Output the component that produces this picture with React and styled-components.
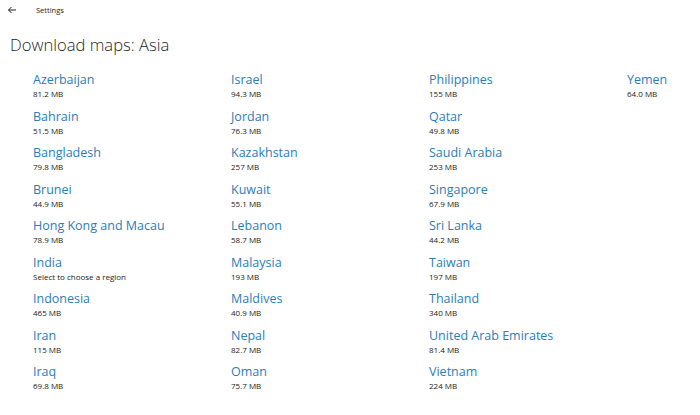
import React from "react";
import styled, { createGlobalStyle } from "styled-components";

const GlobalStyle = createGlobalStyle`
   html, body {
      margin: 0;
      background: #ffffff;
   }
   body {
      font-family: "Open Sans", "Noto Sans", sans-serif;
      color: #1a1a1a;
   }
`;

const regions = [
   ["Azerbaijan", "81.2 MB"],
   ["Bahrain", "51.5 MB"],
   ["Bangladesh", "79.8 MB"],
   ["Brunei", "44.9 MB"],
   ["Hong Kong and Macau", "78.9 MB"],
   ["India", "Select to choose a region"],
   ["Indonesia", "465 MB"],
   ["Iran", "115 MB"],
   ["Iraq", "69.8 MB"],
   ["Israel", "94.3 MB"],
   ["Jordan", "76.3 MB"],
   ["Kazakhstan", "257 MB"],
   ["Kuwait", "55.1 MB"],
   ["Lebanon", "58.7 MB"],
   ["Malaysia", "193 MB"],
   ["Maldives", "40.9 MB"],
   ["Nepal", "82.7 MB"],
   ["Oman", "75.7 MB"],
   ["Philippines", "155 MB"],
   ["Qatar", "49.8 MB"],
   ["Saudi Arabia", "253 MB"],
   ["Singapore", "67.9 MB"],
   ["Sri Lanka", "44.2 MB"],
   ["Taiwan", "197 MB"],
   ["Thailand", "340 MB"],
   ["United Arab Emirates", "81.4 MB"],
   ["Vietnam", "224 MB"],
   ["Yemen", "64.0 MB"],
];

const App = () => {
   return (
      <Page>
         <GlobalStyle />
         <TitleBar>
            <BackButton aria-label="Back">
               <svg width="10" height="10" viewBox="0 0 10 10">
                  <path d="M9 5H1.5M4.5 2L1.5 5L4.5 8" fill="none" stroke="#222" strokeWidth="1" />
               </svg>
            </BackButton>
            <AppName>Settings</AppName>
         </TitleBar>
         <Heading>Download maps: Asia</Heading>
         <RegionGrid>
            {regions.map(([name, size]) => (
               <Region key={name}>
                  <RegionName>{name}</RegionName>
                  <RegionSize>{size}</RegionSize>
               </Region>
            ))}
         </RegionGrid>
      </Page>
   );
};

const Page = styled.div`
   width: 700px;
   height: 415px;
   overflow: hidden;
   background: #ffffff;
`;

const TitleBar = styled.div`
   display: flex;
   align-items: center;
   height: 19px;
   padding-left: 7px;
`;

const BackButton = styled.div`
   display: flex;
   align-items: center;
   justify-content: center;
   width: 10px;
   height: 10px;
   margin-right: 19px;
`;

const AppName = styled.span`
   font-size: 7.5px;
   color: #222;
`;

const Heading = styled.h1`
   margin: 14px 0 0 10px;
   font-size: 16.6px;
   font-weight: 300;
   line-height: 24px;
   color: #1f1f1f;
`;

const RegionGrid = styled.div`
   display: grid;
   grid-auto-flow: column;
   grid-template-rows: repeat(9, 36.5px);
   grid-template-columns: repeat(4, 198px);
   margin: 13px 0 0 33px;
`;

const Region = styled.div`
   display: flex;
   flex-direction: column;
`;

const RegionName = styled.span`
   font-size: 12.5px;
   line-height: 19px;
   color: #2b7db8;
`;

const RegionSize = styled.span`
   font-size: 8px;
   line-height: 10px;
   color: #222;
`;

export default App;
